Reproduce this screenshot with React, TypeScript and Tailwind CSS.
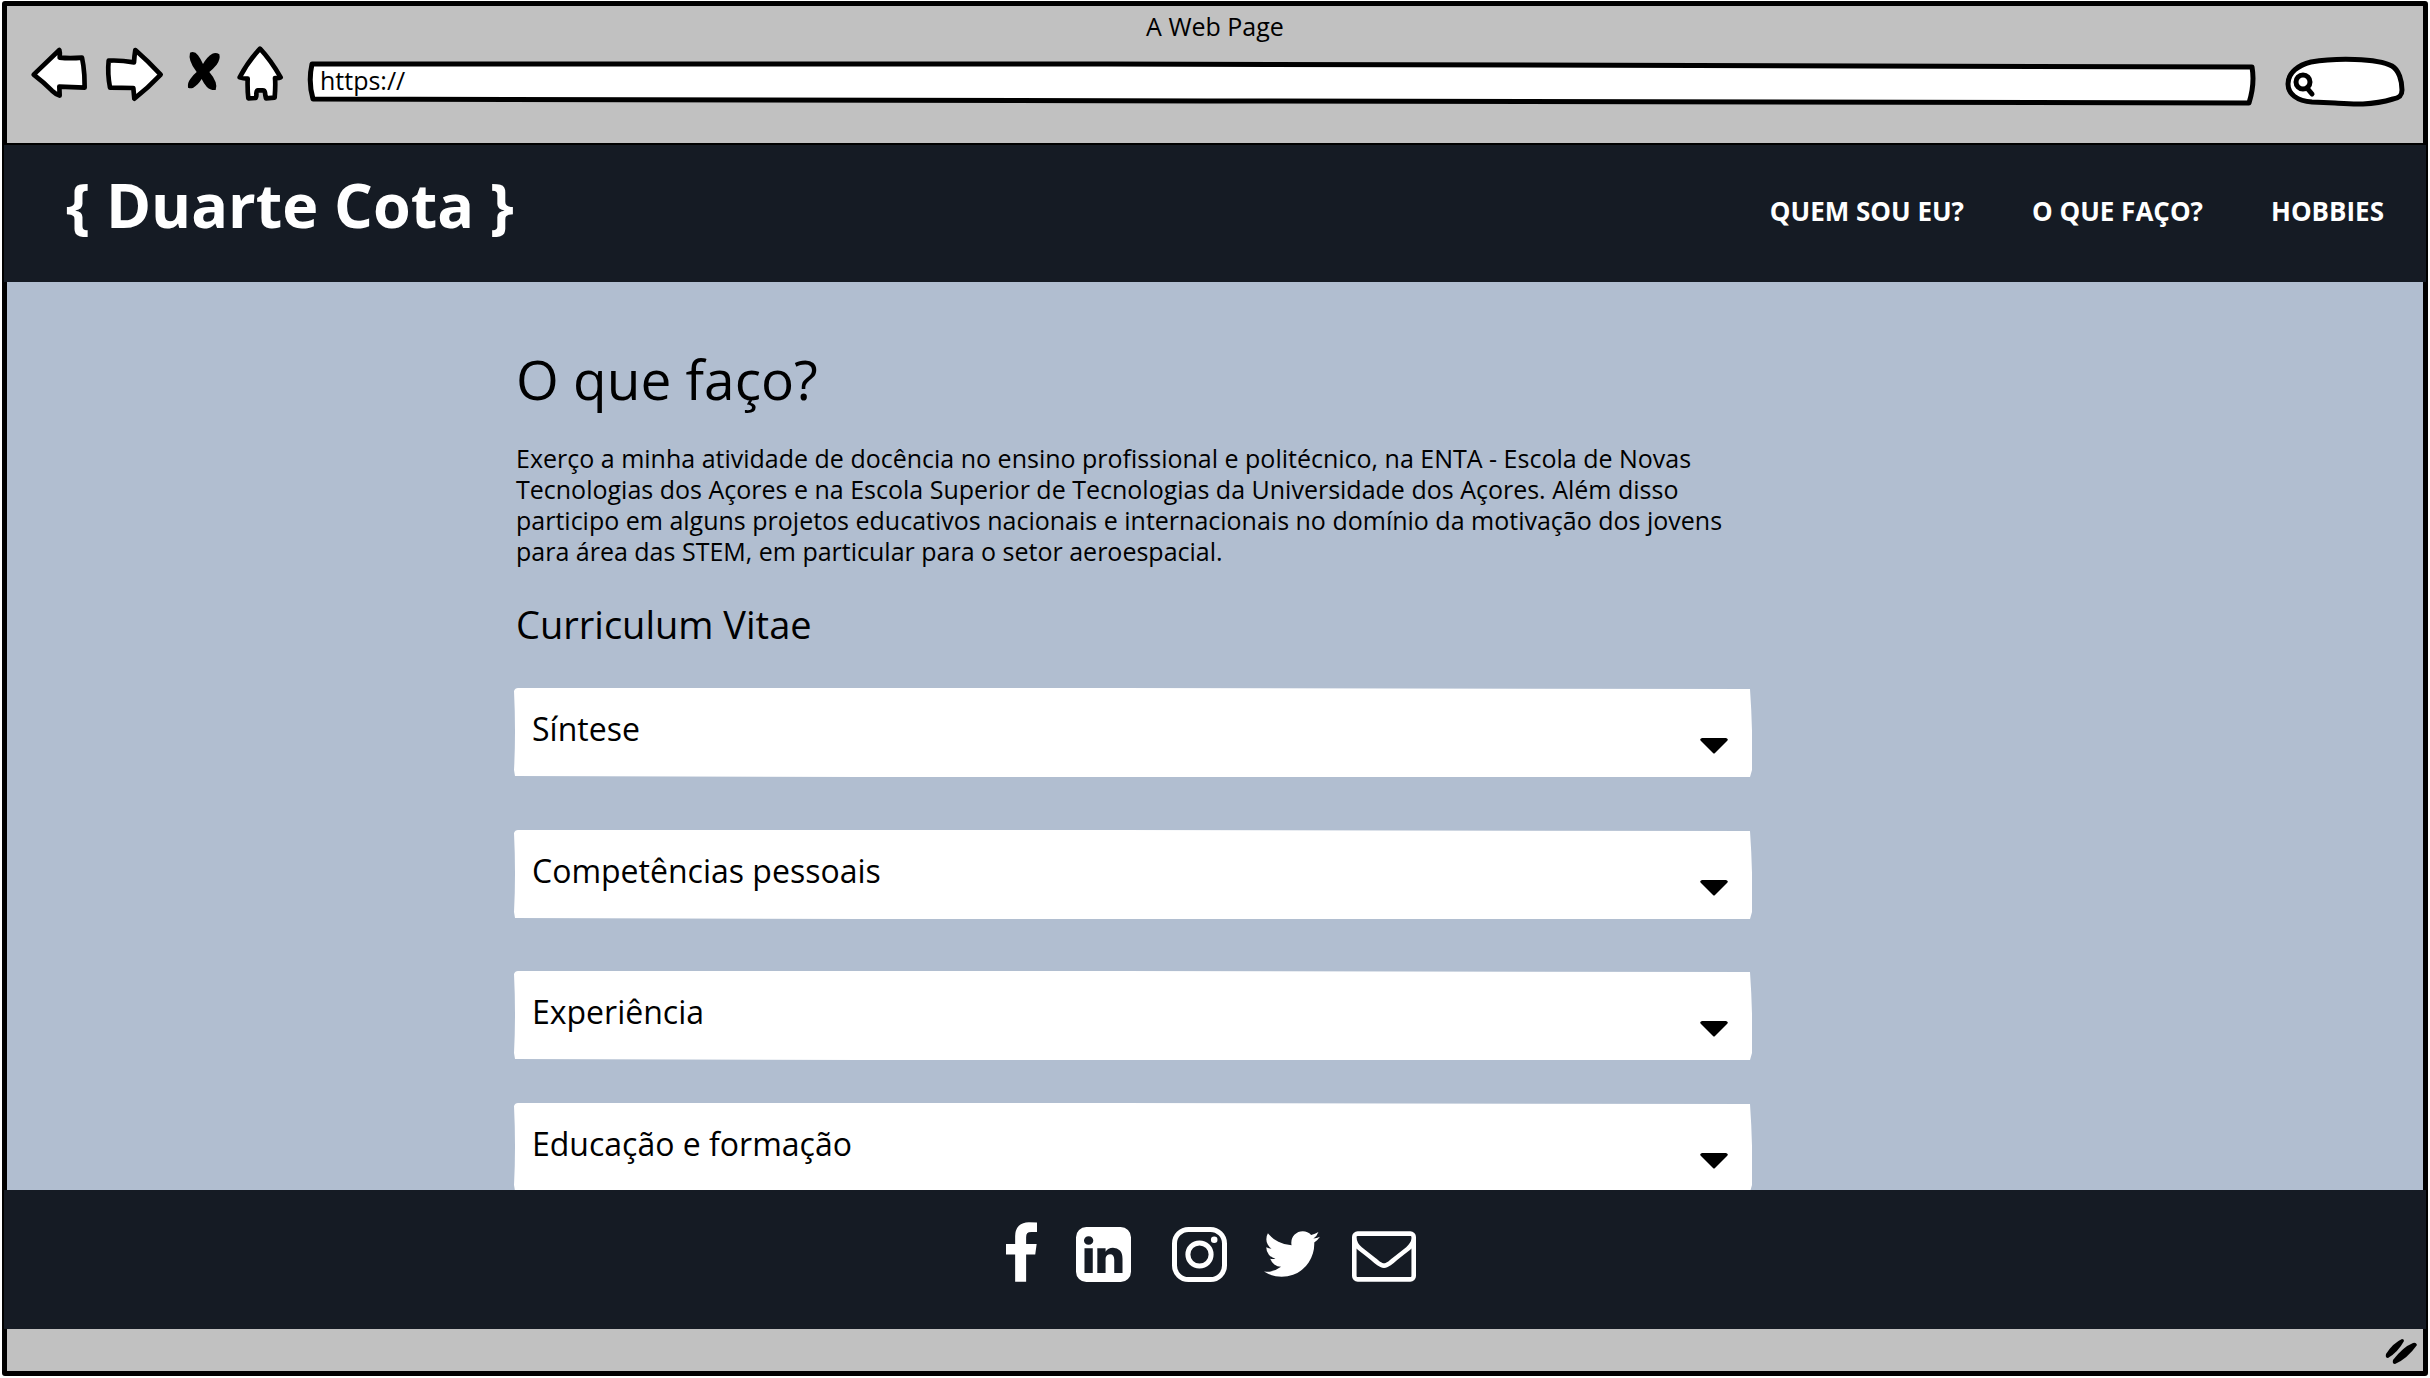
import { ReactNode, useState } from "react";

const sections = [
  { title: "Síntese", spacing: "mt-0" },
  { title: "Competências pessoais", spacing: "mt-[53px]" },
  { title: "Experiência", spacing: "mt-[52px]" },
  { title: "Educação e formação", spacing: "mt-[43px]" },
];

const ink = {
  fill: "#fff",
  stroke: "#000",
  strokeLinejoin: "round" as const,
  strokeLinecap: "round" as const,
};

function ToolButton({ label, className, children }: { label: string; className: string; children: ReactNode }) {
  return (
    <button type="button" aria-label={label} className={`shrink-0 cursor-pointer ${className}`}>
      {children}
    </button>
  );
}

function BrowserBar() {
  return (
    <div className="bg-[#c1c1c1] pt-1 pb-[35px]">
      <p className="text-center text-[25px] leading-[32px] font-medium">A Web Page</p>
      <div className="flex items-start pr-[18px] pl-[21px]">
        <ToolButton label="Voltar" className="mr-3">
          <svg width="62" height="64" viewBox="24 36 186 192" strokeWidth="14" {...ink}>
            <path d="M41 134 L118 60 Q121 70 119 83 Q150 86 186 83 Q191 105 193 135 L194 173 Q155 171 118 170 L119 197 Q108 193 96 182 Q70 156 41 134Z" />
          </svg>
        </ToolButton>
        <ToolButton label="Avançar" className="mr-[18px]">
          <svg width="64" height="64" viewBox="246 36 192 192" strokeWidth="14" {...ink}>
            <path d="M266 92 Q300 90 342 97 Q343 78 346 60 Q385 94 422 134 Q384 174 343 206 L340 174 Q305 173 270 173 Q262 130 266 92Z" />
          </svg>
        </ToolButton>
        <ToolButton label="Parar" className="mr-[10px]">
          <svg width="40" height="64" viewBox="492 36 120 192" fill="#000">
            <path d="M510 68 Q524 62 534 76 Q543 88 549 102 Q561 80 577 71 Q588 66 598 73 Q602 88 590 104 Q580 116 568 126 Q582 142 587 157 Q591 168 587 180 Q570 181 560 170 Q551 160 545 147 Q534 165 520 173 Q512 176 504 173 Q502 158 511 147 Q520 134 530 126 Q516 108 511 92 Q507 79 510 68Z" />
          </svg>
        </ToolButton>
        <ToolButton label="Página inicial" className="mr-[21px]">
          <svg width="52" height="64" viewBox="642 36 156 192" strokeWidth="14" {...ink}>
            <path d="M720 56 Q752 90 782 142 Q776 145 765 144 Q767 165 764 203 L738 205 Q736 198 735 188 Q734 181 728 181 L714 181 Q709 182 709 190 Q710 198 707 204 L685 205 Q682 180 683 146 Q670 146 659 142 Q684 95 720 56Z" />
          </svg>
        </ToolButton>
        <div className="relative mt-[18px] h-[46px] min-w-0 flex-1">
          <svg className="absolute inset-0 h-full w-full" viewBox="0 0 1950 46" preserveAspectRatio="none" strokeWidth="5" {...ink}>
            <path vectorEffect="non-scaling-stroke" d="M5 4 L800 4 L1945 7 Q1948 24 1942 43 L900 41 L6 39 Q1 22 5 4Z" />
          </svg>
          <input
            aria-label="Endereço"
            defaultValue="https://"
            className="relative h-[40px] w-full bg-transparent px-[13px] text-[25px] leading-[32px] font-medium outline-none"
          />
        </div>
        <div className="relative mt-[14px] ml-7 h-[52px] w-[120px] shrink-0">
          <svg className="absolute inset-0" width="120" height="52" viewBox="0 0 120 52" strokeWidth="5" {...ink}>
            <path d="M3 28 C3 16 14 9 26 6 C50 2 92 2 107 10 C114 14 117 25 117 34 C117 40 114 42 108 43 C85 50 65 48 50 47 L27 46 C12 45 3 38 3 28Z" />
            <circle cx="18" cy="26" r="7" />
            <path d="M22 32 L27 38" />
          </svg>
          <input aria-label="Pesquisar" className="relative h-full w-full bg-transparent pr-3 pl-9 text-[25px] outline-none" />
        </div>
      </div>
    </div>
  );
}

function SiteHeader() {
  return (
    <header className="-mx-[3px] flex h-[139px] shrink-0 items-start justify-between border-t-2 border-black bg-[#151b24] pt-6 pr-[42px] pl-[62px] font-bold text-white">
      <a href="#inicio" className="text-[61px] leading-[72px]">{"{ Duarte Cota }"}</a>
      <nav className="mt-6 flex gap-[68px] text-[26px] leading-[36px]">
        <a href="#quem-sou">QUEM SOU EU?</a>
        <a href="#o-que-faco">O QUE FAÇO?</a>
        <a href="#hobbies">HOBBIES</a>
      </nav>
    </header>
  );
}

function Section({ title, spacing }: { title: string; spacing: string }) {
  const [open, setOpen] = useState(false);
  return (
    <button
      type="button"
      aria-expanded={open}
      onClick={() => setOpen(!open)}
      className={`relative flex w-full cursor-pointer items-start justify-between pt-[21px] pr-6 pb-[23px] pl-[18px] text-left text-[32px] leading-[40px] font-medium ${spacing}`}
    >
      <svg className="absolute inset-0 h-full w-full" viewBox="0 0 1238 89" preserveAspectRatio="none" fill="#fff">
        <path d="M0 3 Q1 0 4 0 L600 0 L1236 1 Q1239 44 1238 82 L1236 89 L700 90 L1 88 L0 82 Q2 44 0 3Z" />
      </svg>
      <span className="relative">{title}</span>
      <svg className="relative mt-[29px]" width="28" height="16" viewBox="0 0 28 16">
        <path d="M2 0 H26 Q29 1 27 3 L15 15 Q14 16 13 15 L1 3 Q-1 1 2 0Z" />
      </svg>
    </button>
  );
}

function SiteFooter() {
  return (
    <footer className="-mx-[3px] flex h-[139px] shrink-0 items-start justify-center bg-[#151b24] pt-8 pr-2 text-white">
      <div className="flex h-[60px] items-end fill-white">
        <a href="#facebook" aria-label="Facebook">
          <svg width="31" height="60" viewBox="479 0 864 1664">
            <path d="M1343 12v264h-157q-86 0-116 36t-30 108v189h293l-39 296h-254v759h-306v-759h-255v-296h255v-218q0-186 104-288.5t277-102.5q147 0 228 12z" />
          </svg>
        </a>
        <a href="#linkedin" aria-label="LinkedIn" className="ml-[39px]">
          <svg width="55" height="55" viewBox="128 128 1536 1536">
            <path d="M365 1414h231v-694h-231v694zm246-908q-1-52-36-86t-93-34-94.5 34-36.5 86q0 51 35.5 85.5t92.5 34.5h1q59 0 95-34.5t36-85.5zm585 908h231v-398q0-154-73-233t-193-79q-136 0-209 117h2v-101h-231q3 66 0 694h231v-388q0-38 7-56 15-35 45-59.5t74-24.5q116 0 116 157v371zm468-998v960q0 119-84.5 203.5t-203.5 84.5h-960q-119 0-203.5-84.5t-84.5-203.5v-960q0-119 84.5-203.5t203.5-84.5h960q119 0 203.5 84.5t84.5 203.5z" />
          </svg>
        </a>
        <a href="#instagram" aria-label="Instagram" className="ml-[41px]">
          <svg width="55" height="55" viewBox="0 0 55 55" fill="none" stroke="#fff" strokeWidth="5">
            <rect x="2.5" y="2.5" width="50" height="50" rx="14" />
            <circle cx="27.5" cy="27.5" r="11.6" />
            <circle cx="42.2" cy="12.8" r="3.3" fill="#fff" stroke="none" />
          </svg>
        </a>
        <a href="#twitter" aria-label="Twitter" className="mb-[5px] ml-[37px]">
          <svg width="56" height="46" viewBox="108 256 1576 1280">
            <path d="M1684 408q-67 98-162 167 1 14 1 42 0 130-38 259.5t-115.5 248.5-184.5 210.5-258 146-323 54.5q-271 0-496-145 35 4 78 4 225 0 401-138-105-2-188-64.5t-114-159.5q33 5 61 5 43 0 85-11-112-23-185.5-111.5t-73.5-205.5v-4q68 38 146 41-66-44-105-115t-39-154q0-88 44-163 121 149 294.5 238.5t371.5 99.5q-8-38-8-74 0-134 94.5-228.5t228.5-94.5q140 0 236 102 109-21 205-78-37 115-142 178 93-10 186-50z" />
          </svg>
        </a>
        <a href="#email" aria-label="Email" className="ml-8">
          <svg width="64" height="51" viewBox="0 256 1792 1408">
            <path d="M1664 1504v-768q-32 36-69 66-268 206-426 338-51 43-83 67t-86.5 48.5-102.5 24.5h-2q-48 0-102.5-24.5t-86.5-48.5-83-67q-158-132-426-338-37-30-69-66v768q0 13 9.5 22.5t22.5 9.5h1472q13 0 22.5-9.5t9.5-22.5zm0-1051v-24.5l-.5-13-3-12.5-5.5-9-9-7.5-14-2.5h-1472q-13 0-22.5 9.5t-9.5 22.5q0 168 147 284 193 152 401 317 6 5 35 29.5t46 37.5 44.5 31.5 50.5 27.5 43 9h2q20 0 43-9t50.5-27.5 44.5-31.5 46-37.5 35-29.5q208-165 401-317 54-43 100.5-115.5t46.5-131.5zm128-37v1088q0 66-47 113t-113 47h-1472q-66 0-113-47t-47-113v-1088q0-66 47-113t113-47h1472q66 0 113 47t47 113z" />
          </svg>
        </a>
      </div>
    </footer>
  );
}

export default function App() {
  return (
    <div className="h-screen bg-white px-[2px] pt-px pb-[2px] font-['Open_Sans',sans-serif] text-black">
      <div className="flex h-full flex-col rounded-[3px] border-[5px] border-black">
        <BrowserBar />
        <SiteHeader />
        <main className="grid min-h-0 flex-1 grid-cols-[507fr_1238fr_671fr] items-start overflow-hidden bg-[#b1bed0] pt-[69px]">
          <div className="col-start-2">
            <div className="pl-[2px] font-medium">
              <h1 className="text-[55px] leading-[56px]">O que faço?</h1>
              <p className="mt-9 max-w-[1230px] text-[25px] leading-[31px]">
                Exerço a minha atividade de docência no ensino profissional e politécnico, na ENTA - Escola de Novas
                Tecnologias dos Açores e na Escola Superior de Tecnologias da Universidade dos Açores. Além disso
                participo em alguns projetos educativos nacionais e internacionais no domínio da motivação dos jovens
                para área das STEM, em particular para o setor aeroespacial.
              </p>
              <h2 className="mt-[37px] text-[38px] leading-[40px]">Curriculum Vitae</h2>
            </div>
            <div className="mt-[44px]">
              {sections.map((s) => (
                <Section key={s.title} title={s.title} spacing={s.spacing} />
              ))}
            </div>
          </div>
        </main>
        <SiteFooter />
        <div className="flex h-[42px] shrink-0 items-center justify-end bg-[#c1c1c1] pt-1 pr-1">
          <svg width="34" height="28" viewBox="0 0 34 28" fill="#000">
            <path d="M1 16 Q8 5 17 1 Q19 1 19 3 Q13 14 3 20 Q0 20 1 16Z" />
            <path d="M8 22 Q18 9 28 5 Q31 4 32 7 Q22 21 10 26 Q7 26 8 22Z" />
          </svg>
        </div>
      </div>
    </div>
  );
}
